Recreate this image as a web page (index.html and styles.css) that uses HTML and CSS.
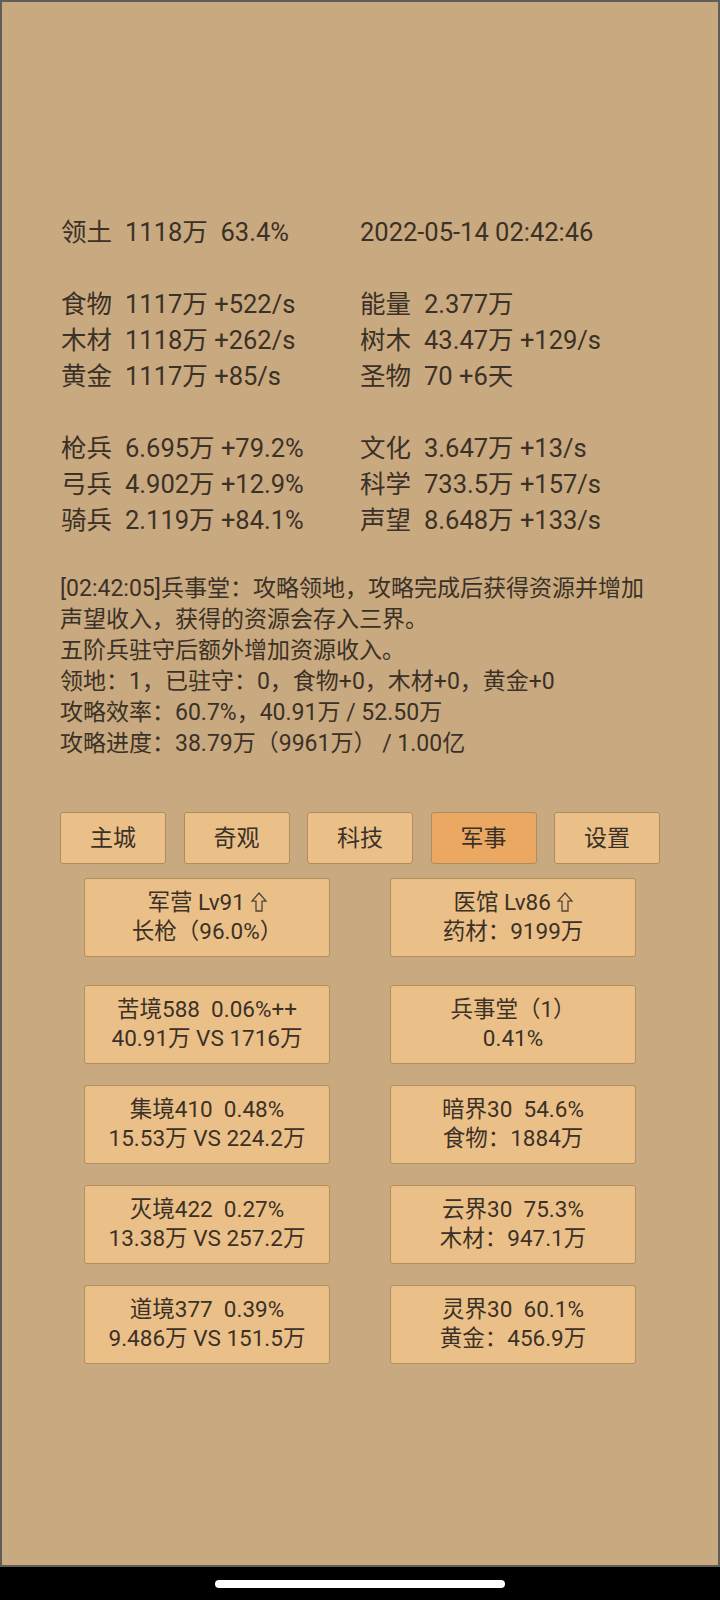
FILE: index.html
```html
<!DOCTYPE html>
<html lang="zh-CN">
<head>
<meta charset="utf-8">
<title>军事</title>
<link rel="stylesheet" href="styles.css">
</head>
<body>
<div class="screen">
  <section class="stats">
    <div class="stat"><span class="k">领土</span>1118万  63.4%</div>
    <div class="stat">2022-05-14 02:42:46</div>
  </section>
  <section class="stats">
    <div class="stat"><span class="k">食物</span>1117万 +522/s</div>
    <div class="stat"><span class="k">能量</span>2.377万</div>
    <div class="stat"><span class="k">木材</span>1118万 +262/s</div>
    <div class="stat"><span class="k">树木</span>43.47万 +129/s</div>
    <div class="stat"><span class="k">黄金</span>1117万 +85/s</div>
    <div class="stat"><span class="k">圣物</span>70 +6天</div>
  </section>
  <section class="stats">
    <div class="stat"><span class="k">枪兵</span>6.695万 +79.2%</div>
    <div class="stat"><span class="k">文化</span>3.647万 +13/s</div>
    <div class="stat"><span class="k">弓兵</span>4.902万 +12.9%</div>
    <div class="stat"><span class="k">科学</span>733.5万 +157/s</div>
    <div class="stat"><span class="k">骑兵</span>2.119万 +84.1%</div>
    <div class="stat"><span class="k">声望</span>8.648万 +133/s</div>
  </section>

  <p class="log">[02:42:05]兵事堂：攻略领地，攻略完成后获得资源并增加<br>声望收入，获得的资源会存入三界。<br>五阶兵驻守后额外增加资源收入。<br>领地：1，已驻守：0，食物+0，木材+0，黄金+0<br>攻略效率：60.7%，40.91万 / 52.50万<br>攻略进度：38.79万（9961万） / 1.00亿</p>

  <nav class="tabs">
    <div class="tab">主城</div>
    <div class="tab">奇观</div>
    <div class="tab">科技</div>
    <div class="tab active">军事</div>
    <div class="tab">设置</div>
  </nav>

  <section class="cards first">
    <div class="card"><div>军营 Lv91 <svg class="up" viewBox="0 0 16 20"><path d="M8 1 L15 9.2 L11 9.2 L11 19 L5 19 L5 9.2 L1 9.2 Z"/></svg></div><div>长枪（96.0%）</div></div>
    <div class="card"><div>医馆 Lv86 <svg class="up" viewBox="0 0 16 20"><path d="M8 1 L15 9.2 L11 9.2 L11 19 L5 19 L5 9.2 L1 9.2 Z"/></svg></div><div>药材：9199万</div></div>
  </section>

  <section class="cards rest">
    <div class="card"><div>苦境588  0.06%++</div><div>40.91万 VS 1716万</div></div>
    <div class="card"><div>兵事堂（1）</div><div>0.41%</div></div>
    <div class="card"><div>集境410  0.48%</div><div>15.53万 VS 224.2万</div></div>
    <div class="card"><div>暗界30  54.6%</div><div>食物：1884万</div></div>
    <div class="card"><div>灭境422  0.27%</div><div>13.38万 VS 257.2万</div></div>
    <div class="card"><div>云界30  75.3%</div><div>木材：947.1万</div></div>
    <div class="card"><div>道境377  0.39%</div><div>9.486万 VS 151.5万</div></div>
    <div class="card"><div>灵界30  60.1%</div><div>黄金：456.9万</div></div>
  </section>
</div>
<div class="navbar"><div class="pill"></div></div>
</body>
</html>
```

FILE: styles.css
```css
* {
  box-sizing: border-box;
}

html,
body {
  margin: 0;
  padding: 0;
}

body {
  width: 720px;
  height: 1600px;
  background: #000;
  font-family: Roboto, "Noto Sans CJK SC", sans-serif;
  color: #3b3127;
  overflow: hidden;
}

.screen {
  height: 1567px;
  background: #c9a97f;
  border: 2px solid #625c56;
  padding: 212px 0 0 59px;
}

.stats {
  display: grid;
  grid-template-columns: 299px auto;
  font-size: 25.5px;
  line-height: 36px;
  white-space: pre;
}

.stats + .stats {
  margin-top: 36px;
}

.k {
  margin-right: 13px;
}

.log {
  margin: 35px 0 0 -1px;
  font-size: 23px;
  line-height: 31px;
  white-space: nowrap;
}

.tabs {
  display: flex;
  gap: 17.5px;
  margin: 53px 0 0 -1px;
}

.tab {
  width: 106px;
  height: 52px;
  display: flex;
  align-items: center;
  justify-content: center;
  padding-bottom: 4px;
  background: #ebc088;
  border: 1px solid #b08b5c;
  border-radius: 3px;
  font-size: 23px;
}

.tab.active {
  background: #eaa862;
}

.cards {
  display: grid;
  grid-template-columns: 246px 246px;
  column-gap: 60px;
  row-gap: 21px;
  margin-left: 23px;
}

.cards.first {
  margin-top: 14px;
}

.cards.rest {
  margin-top: 28px;
}

.card {
  height: 79px;
  display: flex;
  flex-direction: column;
  align-items: center;
  justify-content: center;
  padding-bottom: 1px;
  background: #ebc088;
  border: 1px solid #b48f5c;
  border-radius: 3px;
  font-size: 22.5px;
  line-height: 29.5px;
  white-space: pre;
}

.up {
  width: 16px;
  height: 20px;
  vertical-align: -2px;
  fill: none;
  stroke: #4f4436;
  stroke-width: 1.3;
  stroke-linejoin: miter;
}

.navbar {
  height: 33px;
  background: #000;
  display: flex;
  justify-content: center;
  padding-top: 13px;
}

.pill {
  width: 290px;
  height: 8px;
  border-radius: 4px;
  background: #fff;
}
```
